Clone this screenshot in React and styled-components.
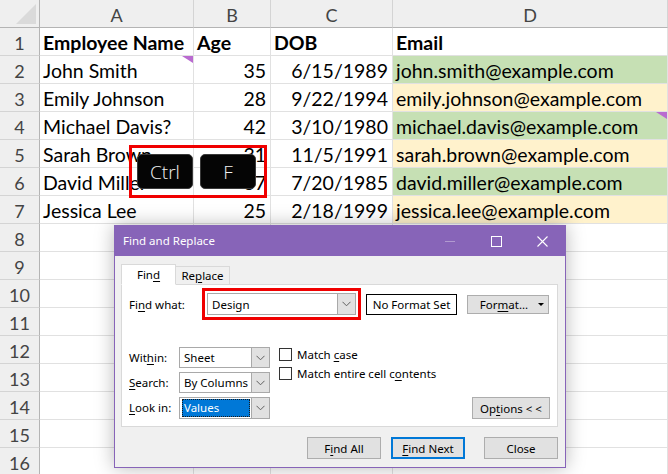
import React from "react";
import styled, { createGlobalStyle, css } from "styled-components";

const GlobalStyle = createGlobalStyle`
  html, body {
    margin: 0;
    padding: 0;
    background: #ffffff;
  }
  body {
    font-family: Lato, "Liberation Sans", sans-serif;
  }
`;

const Sheet = styled.div`
  position: relative;
  width: 668px;
  height: 474px;
  overflow: hidden;
  background: #ffffff;
`;

const Grid = styled.div`
  display: grid;
  grid-template-columns: 40px 154px 77px 122px 1fr;
  grid-auto-rows: 28px;
`;

const Cell = styled.div`
  box-sizing: border-box;
  display: flex;
  align-items: center;
  padding: 1px 4px 0 3px;
  border-right: 1px solid #e1e1e1;
  border-bottom: 1px solid #e1e1e1;
  font-size: 19.5px;
  color: #000;
  white-space: nowrap;
  overflow: visible;
  position: relative;
  background: ${(p) => p.$bg || "#ffffff"};
  font-weight: ${(p) => (p.$bold ? 700 : 400)};
  justify-content: ${(p) => (p.$right ? "flex-end" : "flex-start")};
`;

const Corner = styled.div`
  box-sizing: border-box;
  position: relative;
  background: #efefef;
  border-right: 1px solid #b4b4b4;
  border-bottom: 1px solid #b4b4b4;
  &::after {
    content: "";
    position: absolute;
    right: 3px;
    bottom: 3px;
    width: 0;
    height: 0;
    border-left: 20px solid transparent;
    border-bottom: 20px solid #dadada;
  }
`;

const ColHead = styled.div`
  box-sizing: border-box;
  display: flex;
  align-items: center;
  justify-content: center;
  background: #efefef;
  border-right: 1px solid #d4d4d4;
  border-bottom: 1px solid #b4b4b4;
  font-size: 18px;
  color: #444;
  padding-top: 2px;
`;

const RowHead = styled.div`
  box-sizing: border-box;
  display: flex;
  align-items: center;
  justify-content: center;
  background: #efefef;
  border-right: 1px solid #b4b4b4;
  border-bottom: 1px solid #d4d4d4;
  font-size: 18px;
  color: #444;
  padding-top: 2px;
`;

const CommentMark = styled.span`
  position: absolute;
  top: 0;
  right: 0;
  width: 0;
  height: 0;
  border-left: 11px solid transparent;
  border-top: 7px solid #b96ad0;
`;

const KeyFrame = styled.div`
  position: absolute;
  left: 129px;
  top: 145px;
  width: 138px;
  height: 53px;
  box-sizing: border-box;
  border: 3px solid #f00000;
  display: flex;
  align-items: center;
  gap: 7px;
  padding-left: 5px;
`;

const Key = styled.div`
  width: 56px;
  height: 35px;
  box-sizing: border-box;
  border-radius: 5px;
  background: #050505;
  border: 1px solid #3a3a3a;
  color: #f2f2f2;
  display: flex;
  align-items: center;
  justify-content: center;
  font-family: "Open Sans", "Noto Sans", sans-serif;
  font-size: 19px;
  font-weight: 300;
`;

const Dialog = styled.div`
  position: absolute;
  left: 114px;
  top: 225px;
  width: 452px;
  height: 243px;
  box-sizing: border-box;
  border: 1px solid #8764b8;
  background: #f0f0f0;
  box-shadow: 0 0 18px rgba(0, 0, 0, 0.28);
  display: flex;
  flex-direction: column;
  font-family: "Noto Sans", "Open Sans", sans-serif;
  font-size: 11.5px;
  color: #000;
`;

const TitleBar = styled.div`
  height: 30px;
  flex: none;
  background: #8764b8;
  display: flex;
  align-items: center;
  padding-left: 8px;
  color: #ffffff;
  font-size: 11.5px;
`;

const TitleText = styled.div`
  flex: 1;
  padding-bottom: 1px;
`;

const TitleButton = styled.div`
  width: 46px;
  height: 30px;
  display: flex;
  align-items: center;
  justify-content: center;
  opacity: ${(p) => (p.$disabled ? 0.35 : 1)};
`;

const Body = styled.div`
  flex: 1;
  display: flex;
  flex-direction: column;
  padding: 8px 7px 0 6px;
`;

const Tabs = styled.div`
  display: flex;
  align-items: flex-end;
  height: 21px;
  position: relative;
  z-index: 1;
  margin-bottom: -1px;
`;

const Tab = styled.div`
  box-sizing: border-box;
  display: flex;
  align-items: center;
  justify-content: center;
  border: 1px solid #d9d9d9;
  ${(p) =>
    p.$active
      ? css`
          width: 55px;
          height: 21px;
          background: #ffffff;
          border-bottom-color: #ffffff;
        `
      : css`
          width: 54px;
          height: 19px;
          background: #f0f0f0;
          border-left: none;
        `}
`;

const Panel = styled.div`
  box-sizing: border-box;
  height: 143px;
  background: #ffffff;
  border: 1px solid #d9d9d9;
  display: flex;
  flex-direction: column;
  padding: 8px 7px 0 7px;
`;

const FindRow = styled.div`
  display: flex;
  align-items: center;
  height: 22px;
`;

const FieldLabel = styled.div`
  width: ${(p) => p.$w}px;
  flex: none;
  white-space: nowrap;
`;

const Combo = styled.div`
  box-sizing: border-box;
  width: ${(p) => p.$w}px;
  height: ${(p) => p.$h}px;
  border: 1px solid #a9a9a9;
  background: #ffffff;
  display: flex;
  align-items: stretch;
  ${(p) =>
    p.$marked &&
    css`
      outline: 3px solid #f00000;
      outline-offset: 2px;
    `}
`;

const ComboText = styled.div`
  flex: 1;
  display: flex;
  align-items: center;
  padding-left: 4px;
  white-space: nowrap;
`;

const Selected = styled.span`
  flex: 1;
  align-self: stretch;
  margin: 1px 1px 1px -2px;
  padding-left: 2px;
  display: flex;
  align-items: center;
  background: #0078d7;
  color: #ffffff;
  outline: 1px dotted #1a1a1a;
  outline-offset: -1px;
`;

const DropButton = styled.div`
  width: 17px;
  flex: none;
  background: #e1e1e1;
  border-left: 1px solid #a9a9a9;
  display: flex;
  align-items: center;
  justify-content: center;
`;

const FormatBox = styled.div`
  box-sizing: border-box;
  width: 91px;
  height: 21px;
  margin-left: 10px;
  border: 1px solid #000;
  background: #fff;
  display: flex;
  align-items: center;
  justify-content: center;
  white-space: nowrap;
`;

const Button = styled.div`
  box-sizing: border-box;
  width: ${(p) => p.$w || 74}px;
  height: ${(p) => p.$h || 22}px;
  margin-left: ${(p) => p.$gap || 0}px;
  background: #e1e1e1;
  border: ${(p) => (p.$default ? "2px solid #0078d7" : "1px solid #adadad")};
  display: flex;
  align-items: center;
  justify-content: center;
  position: relative;
  white-space: nowrap;
`;

const FormatLabel = styled.span`
  margin-right: 8px;
`;

const FormatArrow = styled.span`
  position: absolute;
  right: 4px;
  top: 7px;
  width: 0;
  height: 0;
  border-left: 3px solid transparent;
  border-right: 3px solid transparent;
  border-top: 3px solid #000;
`;

const OptionsArea = styled.div`
  display: flex;
  margin-top: 32px;
`;

const SelectGrid = styled.div`
  display: grid;
  grid-template-columns: 50px 91px;
  grid-auto-rows: 21px;
  row-gap: 4px;
  align-items: center;
`;

const Checks = styled.div`
  display: flex;
  flex-direction: column;
  gap: 6px;
  margin-left: 9px;
  padding-top: 1px;
`;

const CheckRow = styled.div`
  display: flex;
  align-items: center;
  gap: 5px;
  height: 13px;
  white-space: nowrap;
`;

const CheckBox = styled.span`
  box-sizing: border-box;
  width: 13px;
  height: 13px;
  border: 1px solid #333;
  background: #fff;
`;

const OptionsWrap = styled.div`
  margin-left: auto;
  align-self: flex-end;
  margin-bottom: -1px;
`;

const Footer = styled.div`
  display: flex;
  justify-content: flex-end;
  align-items: center;
  margin-top: 10px;
`;

const U = styled.span`
  text-decoration: underline;
  text-underline-offset: 2px;
`;

const Chevron = () => (
  <svg width="9" height="6" viewBox="0 0 9 6">
    <path d="M0.5 0.8 L4.5 4.8 L8.5 0.8" fill="none" stroke="#606060" strokeWidth="1" />
  </svg>
);

const Select = ({ w = 91, h = 21, children }) => (
  <Combo $w={w} $h={h}>
    <ComboText>{children}</ComboText>
    <DropButton>
      <Chevron />
    </DropButton>
  </Combo>
);

const rows = [
  ["Employee Name", "Age", "DOB", "Email"],
  ["John Smith", "35", "6/15/1989", "john.smith@example.com"],
  ["Emily Johnson", "28", "9/22/1994", "emily.johnson@example.com"],
  ["Michael Davis?", "42", "3/10/1980", "michael.davis@example.com"],
  ["Sarah Brown", "31", "11/5/1991", "sarah.brown@example.com"],
  ["David Miller", "37", "7/20/1985", "david.miller@example.com"],
  ["Jessica Lee", "25", "2/18/1999", "jessica.lee@example.com"],
];

const GREEN = "#c6e0b4";
const YELLOW = "#fff2cc";

export default function App() {
  const body = [];
  for (let r = 1; r <= 16; r++) {
    const data = rows[r - 1];
    body.push(<RowHead key={`h${r}`}>{r}</RowHead>);
    if (!data) {
      for (let c = 0; c < 4; c++) body.push(<Cell key={`${r}-${c}`} />);
      continue;
    }
    const header = r === 1;
    const emailBg = header ? undefined : r % 2 === 0 ? GREEN : YELLOW;
    body.push(
      <Cell key={`${r}-0`} $bold={header}>
        {data[0]}
        {r === 2 && <CommentMark />}
      </Cell>
    );
    body.push(
      <Cell key={`${r}-1`} $bold={header} $right={!header}>
        {data[1]}
      </Cell>
    );
    body.push(
      <Cell key={`${r}-2`} $bold={header} $right={!header}>
        {data[2]}
      </Cell>
    );
    body.push(
      <Cell key={`${r}-3`} $bold={header} $bg={emailBg}>
        {data[3]}
        {r === 4 && <CommentMark />}
      </Cell>
    );
  }

  return (
    <>
      <GlobalStyle />
      <Sheet>
        <Grid>
          <Corner />
          <ColHead>A</ColHead>
          <ColHead>B</ColHead>
          <ColHead>C</ColHead>
          <ColHead>D</ColHead>
          {body}
        </Grid>

        <KeyFrame>
          <Key>Ctrl</Key>
          <Key>F</Key>
        </KeyFrame>

        <Dialog>
          <TitleBar>
            <TitleText>Find and Replace</TitleText>
            <TitleButton $disabled>
              <svg width="10" height="10" viewBox="0 0 10 10">
                <path d="M0 5.5 H10" stroke="#fff" strokeWidth="1" />
              </svg>
            </TitleButton>
            <TitleButton>
              <svg width="11" height="11" viewBox="0 0 11 11">
                <rect x="0.5" y="0.5" width="10" height="10" fill="none" stroke="#fff" strokeWidth="1" />
              </svg>
            </TitleButton>
            <TitleButton>
              <svg width="11" height="11" viewBox="0 0 11 11">
                <path d="M0.5 0.5 L10.5 10.5 M10.5 0.5 L0.5 10.5" stroke="#fff" strokeWidth="1.1" />
              </svg>
            </TitleButton>
          </TitleBar>

          <Body>
            <Tabs>
              <Tab $active>
                Fin<U>d</U>
              </Tab>
              <Tab>
                Re<U>p</U>lace
              </Tab>
            </Tabs>
            <Panel>
              <FindRow>
                <FieldLabel $w={78}>
                  Fi<U>n</U>d what:
                </FieldLabel>
                <Combo $w={149} $h={22} $marked>
                  <ComboText>Design</ComboText>
                  <DropButton>
                    <Chevron />
                  </DropButton>
                </Combo>
                <FormatBox>No Format Set</FormatBox>
                <Button $w={82} $h={19} $gap={10}>
                  <FormatLabel>
                    For<U>m</U>at...
                  </FormatLabel>
                  <FormatArrow />
                </Button>
              </FindRow>

              <OptionsArea>
                <SelectGrid>
                  <FieldLabel $w={50}>
                    Wit<U>h</U>in:
                  </FieldLabel>
                  <Select>Sheet</Select>
                  <FieldLabel $w={50}>
                    <U>S</U>earch:
                  </FieldLabel>
                  <Select>By Columns</Select>
                  <FieldLabel $w={50}>
                    <U>L</U>ook in:
                  </FieldLabel>
                  <Select h={22}>
                    <Selected>Values</Selected>
                  </Select>
                </SelectGrid>

                <Checks>
                  <CheckRow>
                    <CheckBox />
                    <span>
                      Match <U>c</U>ase
                    </span>
                  </CheckRow>
                  <CheckRow>
                    <CheckBox />
                    <span>
                      Match entire cell c<U>o</U>ntents
                    </span>
                  </CheckRow>
                </Checks>

                <OptionsWrap>
                  <Button $w={78} $h={22}>
                    Op<U>t</U>ions &lt; &lt;
                  </Button>
                </OptionsWrap>
              </OptionsArea>
            </Panel>

            <Footer>
              <Button>
                F<U>i</U>nd All
              </Button>
              <Button $default $gap={10}>
                <U>F</U>ind Next
              </Button>
              <Button $gap={19}>Close</Button>
            </Footer>
          </Body>
        </Dialog>
      </Sheet>
    </>
  );
}
